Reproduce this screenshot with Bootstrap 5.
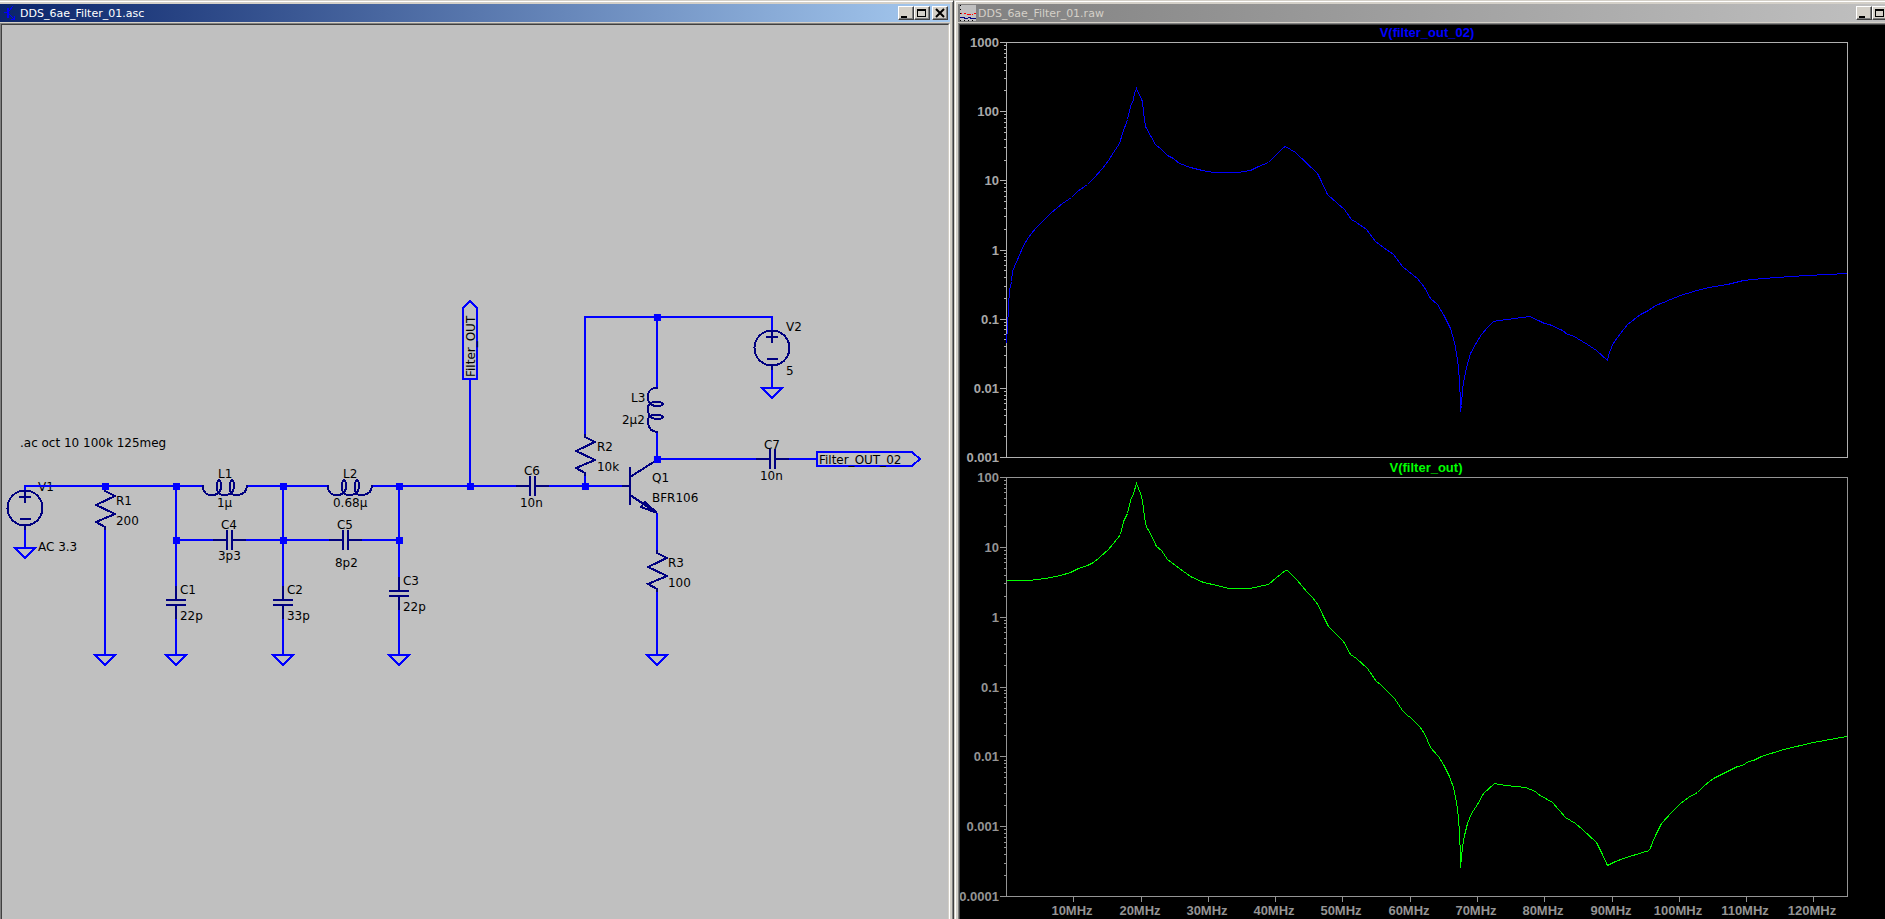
<!DOCTYPE html>
<html lang="en">
<head>
<meta charset="utf-8">
<meta name="viewport" content="width=device-width, initial-scale=1">
<title>DDS_6ae_Filter_01</title>
<link rel="stylesheet" href="https://cdn.jsdelivr.net/npm/bootstrap@5.3.0/dist/css/bootstrap.min.css">
<style>
  :root { --face: #d4d0c8; --shade: #808080; --dark: #404040; }
  body { background: var(--face); font-family: "DejaVu Sans", sans-serif; }

  /* window frames */
  .win { border-top: 1px solid var(--face); box-shadow: inset 0 1px 0 #fff; padding-top: 3px; min-width: 0; }
  .win-asc { flex: 954 1 0; border-right: 1px solid var(--dark); box-shadow: inset 0 1px 0 #fff, inset -1px 0 0 var(--shade); padding-right: 3px; }
  .win-raw { flex: 931 1 0; border-left: 1px solid var(--face); box-shadow: inset 0 1px 0 #fff, inset 1px 0 0 #fff; padding-left: 3px; }
  .titlebar { height: 18px; padding: 0 2px; margin-bottom: 1px; }
  .titlebar h1 { font-size: 11px; line-height: 16px; font-weight: 400; padding: 2px 0 0 2px; }
  .win-asc .titlebar { background: linear-gradient(90deg, #0a246a, #a6caf0); color: #fff; }
  .win-raw .titlebar { background: linear-gradient(90deg, #808080, #c0c0c0); color: var(--face); padding-right: 0; }
  .win-raw .caption-buttons { margin-right: -3px; }
  .caption-btn { width: 16px; height: 14px; padding: 0; border: 1px solid; border-color: #fff var(--dark) var(--dark) #fff; box-shadow: inset -1px -1px 0 var(--shade); background: var(--face); line-height: 0; }
  .caption-btn svg { display: block; }
  .caption-close { margin-left: 2px; }
  .sunken { border: 1px solid var(--shade); border-bottom: 0; border-right-color: #fff; min-height: 0; }
  .sunken > div { border: 1px solid var(--dark); border-bottom: 0; border-right-color: var(--face); }
  .win-raw .sunken, .win-raw .sunken > div { border-right: 0; }
  .sheet { background: #c0c0c0; }
  .scope { background: #000; }

  /* schematic */
  .wire { stroke: #00f; stroke-width: 2; fill: none; shape-rendering: crispEdges; }
  .part { stroke: #000080; stroke-width: 2; fill: none; shape-rendering: crispEdges; }
  .joint { fill: #00f; }
  .note { font-size: 12px; fill: #000; }

  /* plots */
  .plot { font: bold 13px "Liberation Sans", sans-serif; }
  .axis { fill: none; stroke-width: 1; shape-rendering: crispEdges; }
  .trace { fill: none; stroke-width: 1; shape-rendering: crispEdges; }
  .upper .axis { stroke: #b0b0b0; } .upper .tick-label { fill: #a8a8a8; }
  .lower .axis { stroke: #949494; } .lower .tick-label { fill: #949494; }
</style>
</head>
<body>
<main class="d-flex vh-100 overflow-hidden">

  <section class="win win-asc d-flex flex-column" aria-label="Schematic">
    <header class="titlebar d-flex align-items-center flex-shrink-0">
      <svg class="flex-shrink-0" width="16" height="16" viewBox="0 0 16 16" fill="none" stroke="#00f" shape-rendering="crispEdges" aria-hidden="true"><path d="M2 7.500H5"/><path d="M6 3v10" stroke-width="2"/><path d="M7 6l4-5M7 9l5 5M9 14.500h4M12.500 11v4"/></svg>
      <h1 class="mb-0 flex-grow-1 text-truncate">DDS_6ae_Filter_01.asc</h1>
      <div class="caption-buttons d-flex flex-shrink-0">
        <button class="caption-btn" type="button" aria-label="Minimize"><svg width="14" height="12"><path d="M2 9h6v2H2z"/></svg></button>
        <button class="caption-btn" type="button" aria-label="Maximize"><svg width="14" height="12" shape-rendering="crispEdges"><path d="M2 2h9v8H2zM3 4v5h7V4z" fill-rule="evenodd"/></svg></button>
        <button class="caption-btn caption-close" type="button" aria-label="Close"><svg width="14" height="12"><path d="M3 2l8 8M11 2l-8 8" stroke="#000" stroke-width="2"/></svg></button>
      </div>
    </header>
    <div class="sunken flex-grow-1">
      <div class="sheet h-100">
        <svg class="d-block w-100 h-100" viewBox="2 25 946 894" preserveAspectRatio="xMinYMin meet" role="img" aria-label="Filter schematic">
          <defs>
            <path id="resistor" class="part" d="M0 0v3l10 5l-19 9l19 9l-19 8l9 5v3"/>
            <path id="coil" class="part" d="M0-1v4q2 6 8 6h3q7-1 7-9q0-6-2-6q-2 0-2 8q0 6 5 7h4q8-1 8-9q0-6-2-6q-2 0-2 8q0 6 4 7h4q9-1 9-10"/>
            <path id="cap" class="part" d="M-14 0H0M0-10V10M5-10V10M5 0H19"/>
            <path id="ground" class="wire" d="M-10 0H10L0 10z"/>
            <g id="source" class="part"><circle r="17.500"/><path d="M-6-11H6M0-16V-5M-5 11H6M0 18v4"/></g>
          </defs>

          <!-- part names that sit under the wires -->
          <text class="note" x="38" y="491">V1</text>

          <g>
            <path class="wire" d="M25 491V486H203M247 486H328M372 486H516M549 486H622M25 530V548M105 530V655"/>
            <path class="wire" d="M176 486V586M176 619V655M283 486V586M283 619V655M399 486V577M399 610V655"/>
            <path class="wire" d="M176 540H213M246 540H329M362 540H399M470 379V486"/>
            <path class="wire" d="M585 486V476M585 434V317H772V330M772 369V388M657 317V388M657 432V459H756M789 459H817M657 513V550M657 592V655"/>
            <path class="wire" d="M463 379V308L470 301L477 308V379z"/>
            <path class="wire" d="M817 452H912L920 459L912 466H817z"/>
          </g>

          <use href="#source" x="25" y="508"/>
          <use href="#source" x="772" y="348"/>
          <use href="#resistor" x="105" y="488"/>
          <use href="#resistor" x="585" y="434"/>
          <use href="#resistor" x="657" y="550"/>
          <use href="#coil" x="203" y="486"/>
          <use href="#coil" x="328" y="486"/>
          <use href="#coil" transform="translate(657 388) rotate(90)"/>
          <use href="#cap" x="227" y="540"/>
          <use href="#cap" x="343" y="540"/>
          <use href="#cap" x="530" y="486"/>
          <use href="#cap" x="770" y="459"/>
          <use href="#cap" transform="translate(176 600) rotate(90)"/>
          <use href="#cap" transform="translate(283 600) rotate(90)"/>
          <use href="#cap" transform="translate(399 591) rotate(90)"/>
          <path class="part" d="M622 486H630M630 467V505M630 477L657 460M630 495L657 513L645 502L641 507L657 513"/>
          <use href="#ground" x="25" y="548"/>
          <use href="#ground" x="105" y="655"/>
          <use href="#ground" x="176" y="655"/>
          <use href="#ground" x="283" y="655"/>
          <use href="#ground" x="399" y="655"/>
          <use href="#ground" x="657" y="655"/>
          <use href="#ground" x="772" y="388"/>

          <path class="joint" d="M102 483h7v7h-7zM173 483h7v7h-7zM280 483h7v7h-7zM396 483h7v7h-7zM467 483h7v7h-7zM582 483h7v7h-7zM173 537h7v7h-7zM280 537h7v7h-7zM396 537h7v7h-7zM654 314h7v7h-7zM654 456h7v7h-7z"/>

          <g class="note">
            <text x="20" y="447">.ac oct 10 100k 125meg</text>
            <text x="38" y="551">AC 3.3</text>
            <text x="116" y="505">R1</text><text x="116" y="525">200</text>
            <text x="218" y="478">L1</text><text x="217" y="507">1µ</text>
            <text x="221" y="529">C4</text><text x="218" y="560">3p3</text>
            <text x="343" y="478">L2</text><text x="333" y="507">0.68µ</text>
            <text x="337" y="529">C5</text><text x="335" y="567">8p2</text>
            <text x="180" y="594">C1</text><text x="180" y="620">22p</text>
            <text x="287" y="594">C2</text><text x="287" y="620">33p</text>
            <text x="403" y="585">C3</text><text x="403" y="611">22p</text>
            <text x="524" y="475">C6</text><text x="520" y="507">10n</text>
            <text x="597" y="451">R2</text><text x="597" y="471">10k</text>
            <text x="631" y="402">L3</text><text x="622" y="424">2µ2</text>
            <text x="652" y="482">Q1</text><text x="652" y="502">BFR106</text>
            <text x="668" y="567">R3</text><text x="668" y="587">100</text>
            <text x="786" y="331">V2</text><text x="786" y="375">5</text>
            <text x="764" y="449">C7</text><text x="760" y="480">10n</text>
            <text x="819" y="464">Filter_OUT_02</text>
            <text transform="translate(475 377) rotate(-90)">Filter_OUT</text>
          </g>
        </svg>
      </div>
    </div>
  </section>

  <section class="win win-raw d-flex flex-column" aria-label="Waveforms">
    <header class="titlebar d-flex align-items-center flex-shrink-0">
      <svg class="flex-shrink-0" width="16" height="16" viewBox="0 0 16 16" fill="none" shape-rendering="crispEdges" aria-hidden="true"><path fill="#c0c0c0" d="M0 0h16v16H0z"/><path stroke="#000" stroke-dasharray="1 3" d="M.5 0V16M0 15.500H16"/><path stroke="red" d="M1 8.500h1M4 8.500h2M7 9.500h4M12 9.500h1M14 8.500h2"/><path stroke="#000080" d="M0 12.500h5M4 13.500h4M8 12.500h3M10 13.500h6"/></svg>
      <h1 class="mb-0 flex-grow-1 text-truncate">DDS_6ae_Filter_01.raw</h1>
      <div class="caption-buttons d-flex flex-shrink-0">
        <button class="caption-btn" type="button" aria-label="Minimize"><svg width="14" height="12"><path d="M2 9h6v2H2z"/></svg></button>
        <button class="caption-btn" type="button" aria-label="Maximize"><svg width="14" height="12" shape-rendering="crispEdges"><path d="M2 2h9v8H2zM3 4v5h7V4z" fill-rule="evenodd"/></svg></button>
      </div>
    </header>
    <div class="sunken flex-grow-1">
      <div class="scope h-100">
        <svg class="plot d-block w-100 h-100" viewBox="960 25 925 894" preserveAspectRatio="xMinYMin meet" role="img" aria-label="Frequency response of both outputs">
          <g class="upper" id="upper">
            <text x="1427" y="37" text-anchor="middle" fill="#00f">V(filter_out_02)</text>
          </g>
          <polyline class="trace" transform="translate(.5 .5)" stroke="#00f" points="1006,343 1007,325 1008,308 1009,288 1010,287 1011,281 1012,271 1014,266 1018,257 1023,245 1028,237 1035,228 1041,222 1050,213 1062,203 1071,197 1077,191 1087,184 1093,178 1102,168 1108,160 1113,152 1119,143 1122,133 1127,119 1130,106 1133,99 1134,93 1136,88 1142,101 1143,112 1145,126 1150,135 1155,144 1161,149 1167,155 1173,158 1179,163 1190,167 1202,170 1213,172 1237,172 1250,170 1258,166 1268,162 1283,147 1285,146 1295,152 1317,173 1321,181 1327,194 1337,203 1344,209 1351,219 1356,222 1366,229 1375,241 1383,247 1393,254 1402,266 1408,271 1417,278 1424,287 1430,298 1437,304 1443,314 1450,328 1454,342 1456,353 1458,367 1459,381 1460,401 1460,411 1461,405 1462,388 1464,377 1466,367 1470,353 1476,342 1481,334 1487,327 1493,321 1499,320 1529,316 1538,320 1544,323 1549,324 1562,330 1567,334 1572,335 1587,344 1596,350 1607,360 1608,355 1612,344 1620,333 1627,324 1640,314 1648,310 1655,305 1663,302 1670,299 1680,295 1693,291 1708,287 1727,284 1743,280 1763,278 1790,276 1807,275 1847,273"/>
          <g class="lower" id="lower">
            <text x="1426" y="472" text-anchor="middle" fill="#0f0">V(filter_out)</text>
          </g>
          <polyline class="trace" transform="translate(.5 .5)" stroke="#0f0" points="1006,580 1029,580 1045,578 1060,575 1070,572 1078,568 1087,565 1093,562 1099,557 1108,549 1113,543 1120,534 1123,521 1127,513 1130,500 1133,493 1136,483 1140,493 1142,500 1144,517 1146,527 1149,531 1156,546 1161,550 1167,559 1179,568 1190,576 1203,582 1217,585 1228,588 1249,588 1268,584 1276,577 1285,570 1287,570 1297,580 1306,591 1312,597 1318,605 1323,616 1328,626 1343,641 1350,654 1356,658 1367,668 1376,681 1380,684 1394,698 1402,710 1407,715 1410,717 1419,726 1424,733 1430,747 1438,756 1443,764 1449,776 1453,787 1456,802 1458,817 1459,833 1460,855 1460,867 1461,857 1462,847 1464,835 1467,823 1471,813 1477,804 1483,793 1494,783 1505,785 1525,787 1530,789 1535,791 1538,794 1547,799 1552,802 1565,817 1575,823 1582,829 1596,842 1602,854 1607,865 1615,861 1623,858 1642,852 1649,850 1652,842 1656,833 1661,823 1672,811 1680,803 1688,797 1697,792 1704,785 1713,778 1727,771 1737,766 1742,765 1748,761 1753,760 1761,756 1783,749 1813,742 1835,738 1847,736"/>
        </svg>
      </div>
    </div>
  </section>
</main>

<script src="https://cdn.jsdelivr.net/npm/bootstrap@5.3.0/dist/js/bootstrap.bundle.min.js"></script>
<script>
  // Frames, logarithmic scales and the shared frequency axis of the two panes
  const NS = 'http://www.w3.org/2000/svg', LEFT = 1006, RIGHT = 1847;
  function add(parent, tag, attrs, text) {
    const el = document.createElementNS(NS, tag);
    for (const k in attrs) el.setAttribute(k, attrs[k]);
    if (text) el.textContent = text;
    parent.appendChild(el);
  }
  function pane(id, top, bottom, labels, withFrequency) {
    const g = document.getElementById(id), step = (bottom - top) / (labels.length - 1);
    let d = `M${LEFT}.5 ${top}.5H${RIGHT}.5V${bottom}.5H${LEFT}.5z`;
    labels.forEach((label, i) => {
      const y = Math.round(top + i * step);
      d += `M1000 ${y}.5h6`;
      add(g, 'text', { class: 'tick-label', x: 999, y: y + 5, 'text-anchor': 'end' }, label);
      if (i < labels.length - 1)
        for (let n = 2; n < 10; n++) d += `M1004 ${Math.round(top + (i + 1 - Math.log10(n)) * step)}.5h2`;
    });
    if (withFrequency)
      for (let f = 10; f <= 120; f += 10) {
        const x = Math.round(LEFT + f * (RIGHT - LEFT) / 125);
        d += `M${x}.5 ${bottom}v6`;
        add(g, 'text', { class: 'tick-label', x: x - 1, y: bottom + 19, 'text-anchor': 'middle' }, f + 'MHz');
      }
    add(g, 'path', { class: 'axis', d: d });
  }
  pane('upper', 42, 457, ['1000', '100', '10', '1', '0.1', '0.01', '0.001'], false);
  pane('lower', 477, 896, ['100', '10', '1', '0.1', '0.01', '0.001', '0.0001'], true);
</script>
</body>
</html>
